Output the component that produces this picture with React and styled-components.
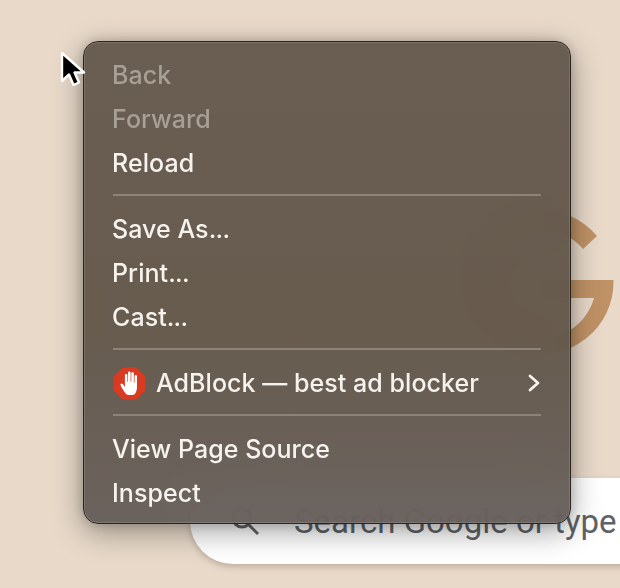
import React from "react";
import styled, { createGlobalStyle } from "styled-components";

const Global = createGlobalStyle`
  html, body { margin: 0; padding: 0; width: 620px; height: 588px; overflow: hidden; background: #e8d9c9; }
  body { font-family: Inter, "Liberation Sans", sans-serif; }
`;

const Page = styled.div`
  position: relative;
  width: 620px;
  height: 588px;
  overflow: hidden;
  background: #e8d9c9;
`;

const Home = styled.div`
  display: flex;
  flex-direction: column;
  padding: 210px 0 0 190px;
`;

const Logo = styled.svg`
  width: 152px;
  height: 152px;
  margin-left: 275px;
  margin-bottom: 116px;
  flex: none;
`;

const SearchBox = styled.div`
  display: flex;
  align-items: center;
  gap: 34px;
  width: 520px;
  height: 86px;
  padding-left: 40px;
  border-radius: 43px;
  background: #fff;
  box-shadow: 0 3px 6px rgba(90, 70, 50, 0.28);
  flex: none;
`;

const SearchText = styled.span`
  font-family: Roboto, "Liberation Sans", sans-serif;
  font-size: 33px;
  color: #5f6368;
  white-space: nowrap;
`;

const Menu = styled.div`
  position: absolute;
  left: 83px;
  top: 41px;
  width: 488px;
  height: 483px;
  box-sizing: border-box;
  padding: 11px 0 8px;
  border: 1px solid #2a241e;
  border-radius: 15px;
  background: linear-gradient(180deg, rgba(97, 86, 75, 0.94) 0%, rgba(96, 85, 72, 0.95) 60%, rgba(100, 92, 88, 0.95) 100%);
  backdrop-filter: blur(24px);
  box-shadow: inset 0 0 0 1px rgba(255, 255, 255, 0.13), 0 8px 30px rgba(0, 0, 0, 0.36), 0 0 12px rgba(0, 0, 0, 0.18);
`;

const Row = styled.div`
  display: flex;
  align-items: center;
  height: 44px;
  padding: 0 29px 0 28px;
  font-size: 25px;
  font-weight: 450;
  letter-spacing: 0.05px;
  color: ${(p) => (p.$disabled ? "#a89f95" : "#f6f2ee")};
  white-space: nowrap;
`;

const Dots = styled.span`
  letter-spacing: -0.7px;
`;

const Separator = styled.div`
  height: 2px;
  margin: 9px 29px 11px;
  background: #8d8378;
`;

const Badge = styled.svg`
  width: 33px;
  height: 33px;
  margin: 0 10px 0 1px;
  flex: none;
`;

const Label = styled.span`
  flex: 1;
`;

const Chevron = styled.svg`
  width: 14px;
  height: 18px;
  flex: none;
`;

const Cursor = styled.svg`
  position: absolute;
  left: 58px;
  top: 50px;
  width: 28px;
  height: 40px;
`;

export default function App() {
  return (
    <Page>
      <Global />
      <Home>
        <Logo viewBox="0 0 152 152">
          <path
            d="M132 26 A 72 72 0 1 0 148.5 70 L 76 70 L 76 88 L 129 88 A 54 54 0 1 1 118 39 Z"
            fill="#bf9265"
          />
        </Logo>
        <SearchBox>
          <svg width="30" height="30" viewBox="0 0 30 30" fill="none" stroke="#5f6368" strokeWidth="3">
            <circle cx="12" cy="12" r="9" />
            <path d="M19 19l9 9" />
          </svg>
          <SearchText>Search Google or type</SearchText>
        </SearchBox>
      </Home>

      <Menu>
        <Row $disabled>Back</Row>
        <Row $disabled>Forward</Row>
        <Row>Reload</Row>
        <Separator />
        <Row>Save As<Dots>...</Dots></Row>
        <Row>Print<Dots>...</Dots></Row>
        <Row>Cast<Dots>...</Dots></Row>
        <Separator />
        <Row>
          <Badge viewBox="0 0 33 33">
            <path d="M10 1h13l9 9v13l-9 9H10l-9-9V10z" fill="#d93a22" stroke="#d93a22" strokeLinejoin="round" />
            <path
              transform="translate(16.5 16.5) scale(1.12) translate(-15 -16.5)"
              d="M11.5 25.5c-1.6-2-3.6-5.5-4.4-7.4-.6-1.3 1.2-2.2 2-1l1.8 2.6V9.2c0-1.5 2.2-1.5 2.2 0V15h.6V6.8c0-1.5 2.3-1.5 2.3 0V15h.6V7.6c0-1.5 2.3-1.5 2.3 0V15.5h.6V10c0-1.5 2.2-1.5 2.2 0v9.5c0 2.2-.5 4.4-1.6 6-.6.9-1.4 1.2-2.4 1.2h-3.8c-1 0-1.7-.4-2.4-1.2z"
              fill="#fff"
            />
          </Badge>
          <Label>AdBlock — best ad blocker</Label>
          <Chevron viewBox="0 0 14 18" fill="none" stroke="#f6f2ee" strokeWidth="2.8" strokeLinecap="round" strokeLinejoin="round">
            <path d="M3 2l8 7-8 7" />
          </Chevron>
        </Row>
        <Separator />
        <Row>View Page Source</Row>
        <Row>Inspect</Row>
      </Menu>

      <Cursor viewBox="0 0 28 40">
        <path d="M4 3v28l7-6.5 4.5 10.5 5.5-2.5-4.5-10h9.5z" fill="#000" stroke="#fff" strokeWidth="2.4" strokeLinejoin="round" />
      </Cursor>
    </Page>
  );
}
